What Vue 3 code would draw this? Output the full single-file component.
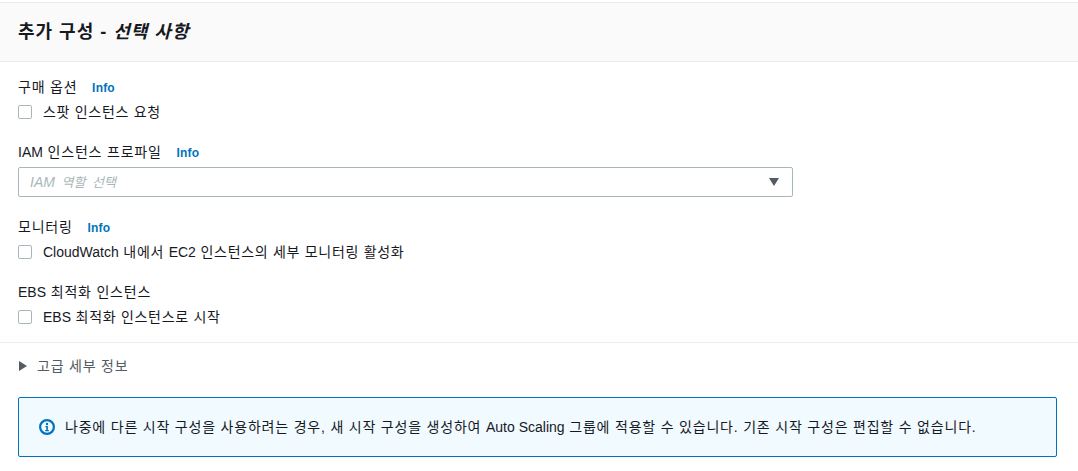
<template>
  <div class="page">
    <div class="section-header">
      <h2>추가 구성 - <em>선택 사항</em></h2>
    </div>

    <div class="form-body">
      <div class="field">
        <div class="field-label">구매 옵션 <a class="info">Info</a></div>
        <label class="check-row">
          <span class="checkbox"></span>
          <span>스팟 인스턴스 요청</span>
        </label>
      </div>

      <div class="field">
        <div class="field-label"><span class="lat">IAM</span> 인스턴스 프로파일 <a class="info">Info</a></div>
        <div class="select-box">
          <span class="placeholder"><span class="lat">IAM</span> 역할 선택</span>
          <span class="caret"></span>
        </div>
      </div>

      <div class="field">
        <div class="field-label">모니터링 <a class="info">Info</a></div>
        <label class="check-row">
          <span class="checkbox"></span>
          <span><span class="lat">CloudWatch</span> 내에서 <span class="lat">EC2</span> 인스턴스의 세부 모니터링 활성화</span>
        </label>
      </div>

      <div class="field">
        <div class="field-label"><span class="lat">EBS</span> 최적화 인스턴스</div>
        <label class="check-row">
          <span class="checkbox"></span>
          <span><span class="lat">EBS</span> 최적화 인스턴스로 시작</span>
        </label>
      </div>
    </div>

    <div class="advanced">
      <span class="arrow"></span>
      <span>고급 세부 정보</span>
    </div>

    <div class="notice">
      <svg class="notice-icon" viewBox="0 0 16 16" width="16" height="16">
        <circle cx="8" cy="8" r="6.9" fill="none" stroke="#0073bb" stroke-width="2.2" />
        <circle cx="8" cy="5" r="1.2" fill="#0073bb" />
        <path d="M6.4 7h2.5v4h1v1.2H6.2V11h1.1V8.2H6.4z" fill="#0073bb" />
      </svg>
      <span>나중에 다른 시작 구성을 사용하려는 경우, 새 시작 구성을 생성하여 <span class="lat">Auto Scaling</span> 그룹에 적용할 수 있습니다. 기존 시작 구성은 편집할 수 없습니다.</span>
    </div>
  </div>
</template>

<script setup>
</script>

<style>
html, body {
  margin: 0;
  background: #fff;
}
</style>

<style scoped>
.page {
  width: 1078px;
  height: 471px;
  overflow: hidden;
  padding-top: 2px;
  box-sizing: border-box;
  font-family: "Liberation Sans", "Noto Sans CJK KR", sans-serif;
  font-size: 14px;
  letter-spacing: 0.8px;
  color: #16191f;
  line-height: 20px;
}

.lat {
  letter-spacing: 0;
}

.section-header {
  height: 58px;
  padding: 0 18px;
  display: flex;
  align-items: center;
  background-color: #fafafa;
  border-top: 1px solid #eaeded;
  border-bottom: 1px solid #eaeded;
}

.section-header h2 {
  margin: 0;
  font-size: 18px;
  letter-spacing: 1px;
  font-weight: 700;
}

.form-body {
  padding: 15px 18px 0;
}

.field {
  margin-bottom: 20px;
}

.field:last-child {
  margin-bottom: 15px;
}

.field-label {
  height: 20px;
}

.info {
  margin-left: 10px;
  font-size: 12px;
  letter-spacing: 0.2px;
  font-weight: 700;
  color: #0073bb;
}

.check-row {
  display: flex;
  align-items: center;
  gap: 11px;
  height: 20px;
  margin-top: 5px;
  letter-spacing: 0.7px;
}

.checkbox {
  width: 12px;
  height: 12px;
  border: 1px solid #aab7b8;
  border-radius: 2px;
}

.select-box {
  display: flex;
  align-items: center;
  justify-content: space-between;
  width: 749px;
  height: 28px;
  margin-top: 5px;
  padding: 0 13px 0 11px;
  border: 1px solid #aab7b8;
  border-radius: 2px;
}

.placeholder {
  font-size: 13px;
  font-style: italic;
  letter-spacing: 0;
  word-spacing: 3px;
  color: #aab7b8;
}

.placeholder .lat {
  font-size: 14px;
}

.caret {
  width: 0;
  height: 0;
  border-left: 5px solid transparent;
  border-right: 5px solid transparent;
  border-top: 8px solid #545b64;
}

.advanced {
  display: flex;
  align-items: center;
  gap: 10px;
  height: 46px;
  padding: 0 19px 2px;
  border-top: 1px solid #eaeded;
  color: #545b64;
}

.arrow {
  width: 0;
  height: 0;
  border-top: 5px solid transparent;
  border-bottom: 5px solid transparent;
  border-left: 8px solid #545b64;
}

.notice {
  display: flex;
  align-items: center;
  gap: 10px;
  width: 1039px;
  height: 60px;
  margin: 6px 0 0 18px;
  padding: 0 20px;
  box-sizing: border-box;
  background-color: #f1faff;
  border: 1px solid #0073bb;
  border-radius: 2px;
}

.notice-icon {
  flex-shrink: 0;
}
</style>
